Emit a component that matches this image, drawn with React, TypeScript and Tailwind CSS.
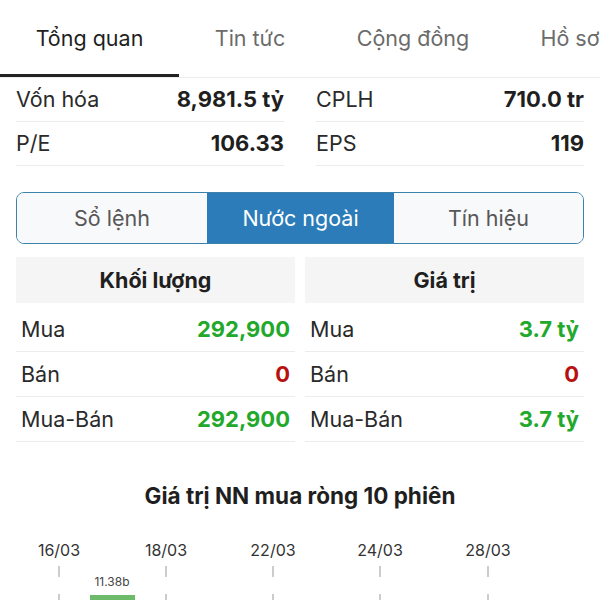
import React from 'react';

const font = { fontFamily: 'Inter, "Liberation Sans", sans-serif' };

const tabs = [
  { t: 'Tổng quan', w: 'w-[179px]' },
  { t: 'Tin tức', w: 'w-[142px]' },
  { t: 'Cộng đồng', w: 'w-[184px]' },
  { t: 'Hồ sơ', w: 'w-[130px]' },
];

function StatRow({ label, value }: { label: string; value: string }) {
  return (
    <div className="flex h-[44px] items-center justify-between border-b border-[#ececec] text-[21.5px]">
      <span className="text-[#2a2a2a]">{label}</span>
      <span className="text-[22px] font-bold text-[#1f1f1f]">{value}</span>
    </div>
  );
}

function TradeRow({ label, value, color }: { label: string; value: string; color: string }) {
  return (
    <div className="flex h-[45px] items-center justify-between border-b border-[#ececec] px-[5px] text-[21.5px]">
      <span className="text-[#2a2a2a]">{label}</span>
      <span className={`text-[22px] font-bold ${color}`}>{value}</span>
    </div>
  );
}

function TradeTable({ title, buy, net }: { title: string; buy: string; net: string }) {
  return (
    <div className="flex flex-col">
      <div className="flex h-[46px] items-center justify-center bg-[#f5f5f5] text-[21.5px] font-bold text-[#1f1f1f]">
        {title}
      </div>
      <div className="h-[4px]" />
      <TradeRow label="Mua" value={buy} color="text-[#22a82a]" />
      <TradeRow label="Bán" value="0" color="text-[#b80f0f]" />
      <TradeRow label="Mua-Bán" value={net} color="text-[#22a82a]" />
    </div>
  );
}

const dates = [
  { x: 59, t: '16/03' },
  { x: 166, t: '18/03' },
  { x: 273, t: '22/03' },
  { x: 380, t: '24/03' },
  { x: 488, t: '28/03' },
];

export default function App() {
  return (
    <div className="h-[600px] w-[600px] overflow-hidden bg-white" style={font}>
      <div className="flex h-[78px] border-b border-[#ececec]">
        {tabs.map((t, i) => (
          <div
            key={t.t}
            className={`flex shrink-0 items-center justify-center text-[21.5px] ${t.w} ${
              i === 0 ? 'border-b-[3px] border-[#222] pt-[3px] text-[#1f1f1f]' : 'text-[#6b6b6b]'
            }`}
          >
            {t.t}
          </div>
        ))}
      </div>

      <div className="grid grid-cols-2 gap-x-[32px] px-[16px]">
        <div>
          <StatRow label="Vốn hóa" value="8,981.5 tỷ" />
          <StatRow label="P/E" value="106.33" />
        </div>
        <div>
          <StatRow label="CPLH" value="710.0 tr" />
          <StatRow label="EPS" value="119" />
        </div>
      </div>

      <div className="mx-[16px] mt-[26px] flex h-[52px] overflow-hidden rounded-[8px] border-[1.5px] border-[#3d82ad] text-[21.5px]">
        <div className="flex w-[190px] items-center justify-center bg-[#f8f9fa] text-[#575757]">Sổ lệnh</div>
        <div className="flex w-[187px] items-center justify-center bg-[#2b7cb8] text-white">Nước ngoài</div>
        <div className="flex flex-1 items-center justify-center bg-[#f8f9fa] text-[#575757]">Tín hiệu</div>
      </div>

      <div className="mt-[13px] grid grid-cols-[279px_279px] gap-x-[10px] px-[16px]">
        <TradeTable title="Khối lượng" buy="292,900" net="292,900" />
        <TradeTable title="Giá trị" buy="3.7 tỷ" net="3.7 tỷ" />
      </div>

      <div className="mt-[37px] text-center text-[22.5px] font-bold text-[#1f1f1f]">
        Giá trị NN mua ròng 10 phiên
      </div>

      <svg width="600" height="90" className="mt-[10px] block">
        {dates.map((d) => (
          <g key={d.t}>
            <text x={d.x} y="33" textAnchor="middle" fontSize="16" fill="#333" style={font}>
              {d.t}
            </text>
            <line x1={d.x} x2={d.x} y1="43" y2="54" stroke="#999" strokeWidth="1" />
            <line x1={d.x} x2={d.x} y1="71" y2="90" stroke="#999" strokeWidth="1" />
          </g>
        ))}
        <text x="112" y="63" textAnchor="middle" fontSize="12" fill="#444" style={font}>
          11.38b
        </text>
        <rect x="90" y="72" width="45" height="30" fill="#6dbb6a" />
      </svg>
    </div>
  );
}
